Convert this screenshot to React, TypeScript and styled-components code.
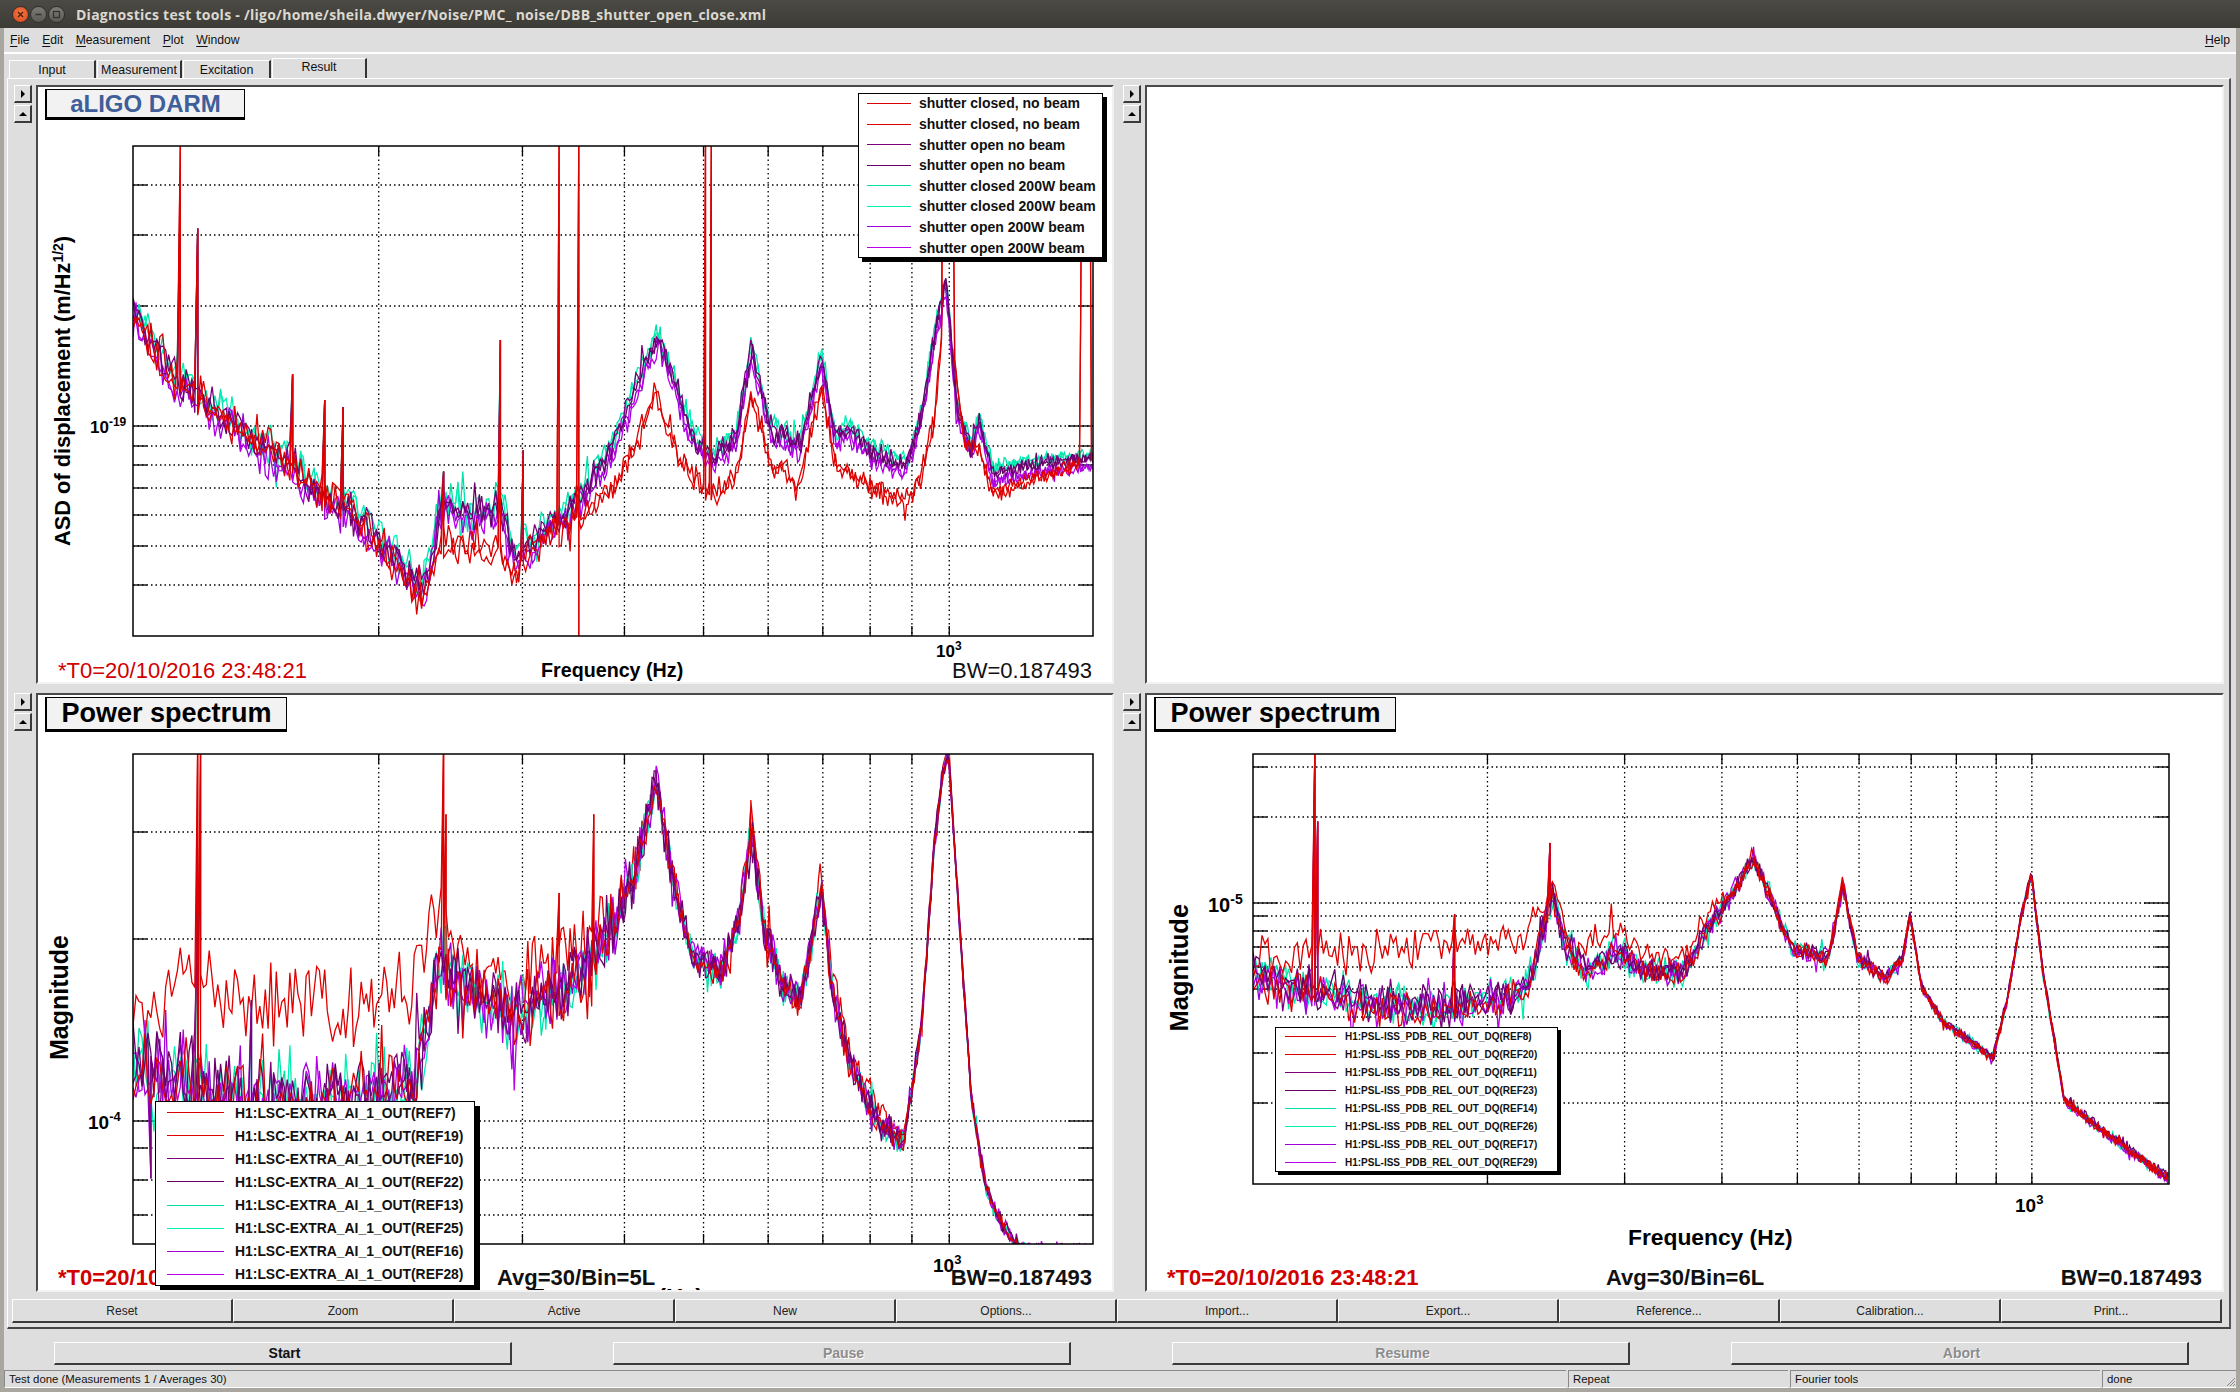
import React from "react"
import styled, { createGlobalStyle, css } from "styled-components"

const SCALE = 2240 / 1568

type Pt = [number, number]
type Spike = { x: number; top?: number; low?: number }
type Trace = { color: string; env: Pt[]; offset?: number; spikes?: Spike[] }
type Rect = { left: number; right: number; top: number; bottom: number }

const RED_A = "#d80000"
const RED_B = "#e00000"
const PURPLE_A = "#7c007c"
const PURPLE_B = "#680068"
const TEAL_A = "#00e0a8"
const TEAL_B = "#00f0b4"
const VIOLET_A = "#a000d8"
const VIOLET_B = "#b800e8"

const GlobalStyle = createGlobalStyle`
  html, body {
    margin: 0;
    padding: 0;
    background: #dedede;
  }
  * {
    box-sizing: border-box;
  }
`

const bevel = css`
  border-style: solid;
  border-width: 1px 2px 2px 1px;
  border-color: #fff #3a3a3a #3a3a3a #fff;
  background: #dedede;
`

const Window = styled.div`
  width: 2240px;
  height: 1392px;
  display: flex;
  flex-direction: column;
  overflow: hidden;
  background: #a9a59f;
  font-family: "Liberation Sans", Arial, sans-serif;
  color: #111;
`

const TitleBar = styled.header`
  height: 28px;
  flex: none;
  display: flex;
  align-items: center;
  padding-left: 12px;
  background: linear-gradient(#4b4a45, #3c3b37);
`

const WinButton = styled.span<{ $bg: string }>`
  width: 17px;
  height: 17px;
  margin-right: 1px;
  border-radius: 50%;
  background: ${(p) => p.$bg};
  border: 1px solid #2e2d2a;
  display: flex;
  align-items: center;
  justify-content: center;
`

const TitleText = styled.span`
  margin-left: 10px;
  font-family: "Open Sans", "Noto Sans", sans-serif;
  font-weight: 700;
  font-size: 14px;
  letter-spacing: 0.26px;
  color: #dcd8cf;
  white-space: nowrap;
`

const Body = styled.div`
  flex: 1;
  margin: 0 4px 4px;
  display: flex;
  flex-direction: column;
  background: #dedede;
`

const MenuBar = styled.nav`
  height: 26px;
  flex: none;
  display: flex;
  align-items: center;
  gap: 12.5px;
  padding: 0 6px 0 6px;
  border-bottom: 2px solid;
  border-image: linear-gradient(#8a8a8a 50%, #fff 50%) 1;
  font-size: 12.2px;

  u {
    text-decoration-thickness: 1px;
    text-underline-offset: 2px;
  }
`

const MenuSpacer = styled.span`
  flex: 1;
`

const TabRow = styled.div`
  height: 24px;
  flex: none;
  display: flex;
  align-items: flex-end;
  padding-left: 5px;
  gap: 1px;
`

const Tab = styled.div<{ $width: number; $active?: boolean }>`
  width: ${(p) => p.$width}px;
  height: ${(p) => (p.$active ? 20 : 18)}px;
  padding-bottom: ${(p) => (p.$active ? 3 : 0)}px;
  display: flex;
  align-items: center;
  justify-content: center;
  font-size: 12.4px;
  border-style: solid;
  border-width: 1px 2px 0 1px;
  border-color: #fff #333 #fff #fff;
  background: #dedede;
`

const TabFrame = styled.section`
  flex: none;
  margin: 0 5px 0 3px;
  padding: 6px 6px 4px 6px;
  border-style: solid;
  border-width: 1px 2px 2px 1px;
  border-color: #fff #555 #444 #fff;
`

const PaneGrid = styled.div`
  display: grid;
  grid-template-columns: 1100px 1101px;
  grid-template-rows: 599px 599px;
  gap: 9px;
`

const Pane = styled.div`
  display: flex;
  gap: 4px;
`

const PaneButtons = styled.div`
  width: 18px;
  flex: none;
  display: flex;
  flex-direction: column;
  gap: 2px;
`

const SmallButton = styled.button`
  ${bevel}
  width: 18px;
  height: 18px;
  padding: 0;
  display: flex;
  align-items: center;
  justify-content: center;
`

const ArrowRight = styled.span`
  width: 0;
  height: 0;
  border-left: 4px solid #000;
  border-top: 4px solid transparent;
  border-bottom: 4px solid transparent;
`

const ArrowUp = styled.span`
  width: 0;
  height: 0;
  border-bottom: 4px solid #000;
  border-left: 4px solid transparent;
  border-right: 4px solid transparent;
`

const Canvas = styled.div`
  position: relative;
  flex: 1;
  overflow: hidden;
  background: #fff;
  border-style: solid;
  border-width: 2px;
  border-color: #4a4a4a #f2f2f2 #f2f2f2 #4a4a4a;
`

const ChartSvg = styled.svg`
  display: block;
  position: absolute;
  left: 0;
  top: 0;
`

const ChartText = styled.text<{ $size: number }>`
  font-family: "Liberation Sans", Arial, sans-serif;
  font-weight: 700;
  font-size: ${(p) => p.$size}px;
  fill: #000;
`

const PlotTitle = styled.div<{ $width: number; $height: number; $size: number; $color?: string }>`
  position: absolute;
  left: 7px;
  top: 2px;
  width: ${(p) => p.$width}px;
  height: ${(p) => p.$height}px;
  display: flex;
  align-items: center;
  justify-content: center;
  background: #f2f2f2;
  border: 1px solid #000;
  border-left-width: 2px;
  border-bottom-width: 3px;
  font-weight: 700;
  font-size: ${(p) => p.$size}px;
  color: ${(p) => p.$color ?? "#000"};
  white-space: nowrap;
`

const Stats = styled.div<{ $bold?: boolean }>`
  position: absolute;
  left: 0;
  right: 0;
  bottom: ${(p) => (p.$bold ? 1 : 0)}px;
  height: 24px;
  padding: 0 20px;
  display: grid;
  grid-template-columns: 439px 1fr auto;
  align-items: center;
  font-size: 22px;
  font-weight: ${(p) => (p.$bold ? 700 : 400)};
  white-space: nowrap;
`

const StampText = styled.span`
  color: #d00000;
`

const Legend = styled.div<{ $x: number; $y: number; $w: number; $h: number; $shadow: number }>`
  position: absolute;
  left: ${(p) => p.$x}px;
  top: ${(p) => p.$y}px;
  width: ${(p) => p.$w}px;
  height: ${(p) => p.$h}px;
  background: #fff;
  border: 1px solid #000;
  box-shadow: ${(p) => p.$shadow}px ${(p) => p.$shadow}px 0 #000;
  display: flex;
  flex-direction: column;
  justify-content: center;
`

const LegendRow = styled.div<{ $h: number; $size: number; $pad: number; $gap: number }>`
  height: ${(p) => p.$h}px;
  flex: none;
  display: flex;
  align-items: center;
  gap: ${(p) => p.$gap}px;
  padding-left: ${(p) => p.$pad}px;
  font-size: ${(p) => p.$size}px;
  font-weight: 700;
  white-space: nowrap;
`

const Swatch = styled.span<{ $w: number; $color: string }>`
  width: ${(p) => p.$w}px;
  height: 1px;
  flex: none;
  background: ${(p) => p.$color};
`

const ToolRow = styled.div`
  margin: 7px 0 0 -2px;
  width: 2210px;
  height: 24px;
  display: grid;
  grid-template-columns: repeat(10, 1fr);
`

const ToolButton = styled.button`
  ${bevel}
  padding: 0;
  font: 400 12px "Liberation Sans", Arial, sans-serif;
  color: #222;
`

const ActionRow = styled.div`
  flex: none;
  margin-top: 13px;
  padding-left: 50px;
  display: flex;
  gap: 101px;
`

const ActionButton = styled.button<{ $off?: boolean }>`
  ${bevel}
  width: 458px;
  height: 23px;
  padding: 0 0 0 4px;
  font: 700 14px "Liberation Sans", Arial, sans-serif;
  color: ${(p) => (p.$off ? "#8c8c8c" : "#111")};
  text-shadow: ${(p) => (p.$off ? "1px 1px 0 #fff" : "none")};
`

const StatusBar = styled.footer`
  flex: none;
  margin-top: 5px;
  height: 18px;
  display: grid;
  grid-template-columns: 1562px 220px 310px 1fr;
  gap: 2px;
  font-size: 11.4px;
`

const StatusCell = styled.div`
  position: relative;
  display: flex;
  align-items: center;
  padding-left: 4px;
  border-style: solid;
  border-width: 1px 0 1px 1px;
  border-color: #8a8a8a #fff #fff #8a8a8a;
`

const Grip = styled.svg`
  position: absolute;
  right: 0;
  bottom: 0;
`

function mulberry(seed: number) {
  let a = seed
  return () => {
    a = (a + 0x6d2b79f5) | 0
    let t = Math.imul(a ^ (a >>> 15), 1 | a)
    t = (t + Math.imul(t ^ (t >>> 7), 61 | t)) ^ t
    return ((t ^ (t >>> 14)) >>> 0) / 4294967296
  }
}

function lerp(pts: Pt[], x: number) {
  if (x <= pts[0][0]) return pts[0][1]
  for (let i = 1; i < pts.length; i++) {
    if (x <= pts[i][0]) {
      const [x0, y0] = pts[i - 1]
      const [x1, y1] = pts[i]
      return y0 + ((y1 - y0) * (x - x0)) / (x1 - x0)
    }
  }
  return pts[pts.length - 1][1]
}

// env, amp and spikes are written in the units of the 1568 wide overview
function buildTrace(t: Trace, amp: Pt[], rect: Rect, seed: number) {
  const rnd = mulberry(seed)
  const out: string[] = []
  const spikes = [...(t.spikes ?? [])].sort((a, b) => a.x - b.x)
  let next = 0
  const from = rect.left / SCALE
  const to = rect.right / SCALE
  let d = from
  while (d <= to) {
    let n = (rnd() + rnd() - 1) * lerp(amp, d)
    if (rnd() < 0.06) n *= 1.8
    const y = lerp(t.env, d) + (t.offset ?? 0) + n
    while (next < spikes.length && spikes[next].x <= d) {
      const s = spikes[next]
      const px = (d * SCALE).toFixed(1)
      if (s.top !== undefined) out.push(`${px},${(s.top * SCALE).toFixed(1)}`)
      if (s.low !== undefined) out.push(`${px},${(s.low * SCALE).toFixed(1)}`)
      next++
    }
    out.push(`${(d * SCALE).toFixed(1)},${(y * SCALE).toFixed(1)}`)
    // points lie wider apart at the low end of the log axis
    d += (3 - (1.8 * (d - from)) / (to - from)) / SCALE
  }
  return out.join(" ")
}

const DARM_ENV: Pt[] = [
  [93, 215], [110, 245], [125, 265], [150, 285], [180, 310], [200, 320], [225, 345], [250, 360], [270, 380],
  [295, 412], [300, 395], [310, 350], [330, 365], [350, 350], [360, 390], [375, 375], [395, 360], [415, 335],
  [430, 310], [445, 270], [460, 235], [472, 265], [485, 305], [500, 320], [515, 305], [526, 245], [540, 300],
  [560, 310], [575, 250], [585, 305], [595, 300], [610, 315], [635, 325], [645, 290], [655, 230], [662, 195],
  [670, 285], [680, 315], [685, 292], [695, 330], [720, 325], [765, 320],
]
const DARM_RED: Pt[] = [
  [93, 215], [110, 245], [125, 265], [150, 285], [180, 310], [200, 320], [225, 345], [250, 360], [270, 385],
  [295, 422], [300, 405], [310, 380], [330, 385], [350, 385], [360, 400], [375, 380], [395, 370], [415, 352],
  [430, 340], [445, 310], [458, 275], [472, 310], [485, 335], [500, 345], [515, 335], [526, 275], [540, 325],
  [560, 335], [575, 270], [585, 325], [610, 340], [635, 350], [645, 330], [655, 285], [659, 240], [660, 90],
  [667, 90], [668, 250], [675, 310], [685, 312], [695, 345], [720, 335], [756, 324], [757, 90], [763, 90],
  [764, 320], [765, 320],
]
const DARM_AMP: Pt[] = [[93, 17], [300, 17], [450, 11], [660, 9], [700, 6], [765, 5]]
const DARM_LINES: Spike[] = [
  { x: 125, top: 130 }, { x: 138, top: 160 }, { x: 203, top: 262 }, { x: 226, top: 280 }, { x: 240, top: 285 },
  { x: 310, top: 330 }, { x: 350, top: 238 }, { x: 365, top: 315 },
]
const DARM_RED_LINES: Spike[] = [
  { x: 125, top: 102 }, { x: 138, top: 160 }, { x: 203, top: 262 }, { x: 226, top: 280 }, { x: 240, top: 285 },
  { x: 310, top: 330 }, { x: 350, top: 238 }, { x: 365, top: 315 }, { x: 391, top: 100 }, { x: 404, top: 100, low: 450 },
  { x: 493, top: 100 }, { x: 497, top: 100, low: 350 },
]

const LSC_ENV: Pt[] = [
  [93, 745], [130, 755], [170, 772], [200, 772], [250, 768], [290, 758], [298, 720], [308, 670], [320, 690],
  [340, 700], [360, 715], [380, 695], [400, 690], [415, 670], [430, 645], [445, 610], [459, 545], [470, 610],
  [485, 670], [505, 680], [518, 640], [526, 580], [535, 650], [548, 690], [560, 700], [568, 660], [575, 620],
  [582, 690], [595, 745], [615, 785], [632, 800], [645, 720], [654, 590], [660, 540], [664, 528], [670, 620],
  [680, 770], [690, 830], [700, 855], [715, 875],
]
const LSC_HIGH: Pt[] = [
  [93, 700], [130, 690], [180, 700], [220, 700], [260, 700], [285, 690], [298, 670], [308, 630], [320, 670],
  [340, 680], [360, 695], [380, 670], [400, 672], [415, 650], [430, 640], [445, 608], [459, 545], [470, 610],
  [485, 670], [505, 680], [518, 640], [526, 570], [535, 650], [548, 690], [560, 700], [568, 660], [575, 610],
  [582, 680], [595, 735], [615, 775], [632, 795], [645, 720], [654, 590], [660, 540], [664, 520], [670, 620],
  [680, 770], [690, 830], [700, 855], [715, 875],
]
const LSC_AMP: Pt[] = [[93, 36], [300, 34], [440, 26], [460, 14], [530, 16], [600, 13], [665, 6], [765, 4]]
const LSC_LINES: Spike[] = [
  { x: 105, low: 825 }, { x: 138, top: 640 }, { x: 175, top: 700 },
]
const LSC_RED_LINES: Spike[] = [
  { x: 137, top: 520 }, { x: 138.5, top: 520 }, { x: 140, top: 600 }, { x: 310, top: 520 }, { x: 311.5, top: 570 },
  { x: 390, top: 625 }, { x: 415, top: 570 }, { x: 525, top: 565 },
]

const PSL_ENV: Pt[] = [
  [878, 682], [900, 690], [950, 700], [1000, 705], [1050, 700], [1070, 690], [1080, 650], [1087, 625], [1095, 660],
  [1110, 680], [1130, 665], [1150, 680], [1180, 680], [1195, 650], [1210, 630], [1227, 600], [1240, 630], [1255, 665],
  [1280, 670], [1290, 620], [1300, 670], [1320, 685], [1332, 670], [1337, 640], [1345, 690], [1360, 715], [1395, 740],
  [1405, 700], [1415, 640], [1422, 612], [1430, 680], [1445, 770], [1470, 790], [1518, 825],
]
const PSL_HIGH: Pt[] = [
  [878, 672], [920, 668], [1000, 662], [1060, 660], [1075, 640], [1087, 615], [1100, 670], [1130, 650], [1150, 665],
  [1180, 668], [1195, 640], [1210, 628], [1227, 600], [1240, 630], [1255, 665], [1280, 670], [1290, 618], [1300, 670],
  [1320, 685], [1332, 670], [1337, 640], [1345, 690], [1360, 715], [1395, 740], [1405, 700], [1415, 640], [1422, 612],
  [1430, 680], [1445, 770], [1470, 790], [1518, 825],
]
const PSL_AMP: Pt[] = [[878, 20], [1070, 16], [1210, 9], [1290, 7], [1350, 4], [1518, 4]]
const PSL_LINES: Spike[] = [
  { x: 920, top: 527 }, { x: 921, top: 575 }, { x: 1017, top: 640 }, { x: 1085, top: 590 },
]

const darmTraces: Trace[] = [
  { color: TEAL_A, env: DARM_ENV, offset: -3, spikes: DARM_LINES },
  { color: TEAL_B, env: DARM_ENV, offset: -2, spikes: DARM_LINES },
  { color: VIOLET_A, env: DARM_ENV, offset: 6, spikes: DARM_LINES },
  { color: VIOLET_B, env: DARM_ENV, offset: 7 },
  { color: PURPLE_A, env: DARM_ENV, spikes: DARM_LINES },
  { color: PURPLE_B, env: DARM_ENV, offset: 1 },
  { color: RED_A, env: DARM_RED, spikes: DARM_RED_LINES },
  { color: RED_B, env: DARM_RED, offset: 2, spikes: DARM_RED_LINES },
]

const lscTraces: Trace[] = [
  { color: RED_B, env: LSC_HIGH, spikes: LSC_RED_LINES },
  { color: TEAL_A, env: LSC_ENV, spikes: LSC_LINES },
  { color: TEAL_B, env: LSC_ENV, offset: 2 },
  { color: VIOLET_A, env: LSC_ENV, offset: 2, spikes: LSC_LINES },
  { color: VIOLET_B, env: LSC_ENV, offset: -2 },
  { color: PURPLE_A, env: LSC_ENV, offset: 1, spikes: LSC_LINES },
  { color: PURPLE_B, env: LSC_ENV, offset: -1 },
  { color: RED_A, env: LSC_ENV, offset: 1, spikes: LSC_RED_LINES },
]

const pslTraces: Trace[] = [
  { color: TEAL_A, env: PSL_ENV, spikes: PSL_LINES },
  { color: TEAL_B, env: PSL_ENV, offset: 1 },
  { color: VIOLET_A, env: PSL_ENV, spikes: PSL_LINES },
  { color: VIOLET_B, env: PSL_ENV, offset: 1, spikes: PSL_LINES },
  { color: PURPLE_A, env: PSL_ENV },
  { color: PURPLE_B, env: PSL_ENV, offset: -1 },
  { color: RED_A, env: PSL_ENV, offset: 1, spikes: PSL_LINES },
  { color: RED_B, env: PSL_HIGH, spikes: PSL_LINES },
]

const GRID_FREQS = [200, 300, 400, 500, 600, 700, 800, 900, 1000]

type PlotProps = {
  id: string
  origin: Pt
  size: Pt
  rect: Rect
  yTicks: { y: number; major?: boolean }[]
  traces: Trace[]
  amp: Pt[]
  seed: number
  children?: React.ReactNode
}

function Plot({ id, origin, size, rect, yTicks, traces, amp, seed, children }: PlotProps) {
  const w = rect.right - rect.left
  const xOf = (f: number) => rect.left + (w * Math.log10(f / 100)) / Math.log10(15)
  return (
    <ChartSvg width={size[0]} height={size[1]} viewBox={`${origin[0]} ${origin[1]} ${size[0]} ${size[1]}`}>
      <defs>
        <clipPath id={id}>
          <rect x={rect.left} y={rect.top} width={w} height={rect.bottom - rect.top} />
        </clipPath>
      </defs>
      {GRID_FREQS.map((f) => (
        <g key={f} stroke="#000" strokeWidth={1.3}>
          <line x1={xOf(f)} x2={xOf(f)} y1={rect.top} y2={rect.bottom} strokeDasharray="1.5 3" />
          <line x1={xOf(f)} x2={xOf(f)} y1={rect.top} y2={rect.top + 10} />
          <line x1={xOf(f)} x2={xOf(f)} y1={rect.bottom - 10} y2={rect.bottom} />
        </g>
      ))}
      {yTicks.map((t) => (
        <g key={t.y} stroke="#000" strokeWidth={1.3}>
          <line x1={rect.left} x2={rect.right} y1={t.y} y2={t.y} strokeDasharray="1.5 3" />
          <line x1={rect.left} x2={rect.left + (t.major ? 25 : 14)} y1={t.y} y2={t.y} />
          <line x1={rect.right - (t.major ? 25 : 14)} x2={rect.right} y1={t.y} y2={t.y} />
        </g>
      ))}
      <g clipPath={`url(#${id})`} fill="none" strokeWidth={1.3} strokeLinejoin="miter">
        {traces.map((t, i) => (
          <polyline key={i} points={buildTrace(t, amp, rect, seed + i * 97)} stroke={t.color} />
        ))}
      </g>
      <rect x={rect.left} y={rect.top} width={w} height={rect.bottom - rect.top} fill="none" stroke="#000" strokeWidth={1.5} />
      {children}
    </ChartSvg>
  )
}

const PaneArrows = () => (
  <PaneButtons>
    <SmallButton>
      <ArrowRight />
    </SmallButton>
    <SmallButton>
      <ArrowUp />
    </SmallButton>
  </PaneButtons>
)

type LegendEntry = { name: string; color: string }
const legendColors = [RED_A, RED_B, PURPLE_A, PURPLE_B, TEAL_A, TEAL_B, VIOLET_A, VIOLET_B]
const darmLegend: LegendEntry[] = [
  "shutter closed, no beam",
  "shutter closed, no beam",
  "shutter open no beam",
  "shutter open no beam",
  "shutter closed 200W beam",
  "shutter closed 200W beam",
  "shutter open 200W beam",
  "shutter open 200W beam",
].map((name, i) => ({ name, color: legendColors[i] }))
const lscLegend: LegendEntry[] = [7, 19, 10, 22, 13, 25, 16, 28].map((n, i) => ({
  name: `H1:LSC-EXTRA_AI_1_OUT(REF${n})`,
  color: legendColors[i],
}))
const pslLegend: LegendEntry[] = [8, 20, 11, 23, 14, 26, 17, 29].map((n, i) => ({
  name: `H1:PSL-ISS_PDB_REL_OUT_DQ(REF${n})`,
  color: legendColors[i],
}))

const TOOL_LABELS = ["Reset", "Zoom", "Active", "New", "Options...", "Import...", "Export...", "Reference...", "Calibration...", "Print..."]

export default function App() {
  const s = SCALE
  return (
    <>
      <GlobalStyle />
      <Window>
        <TitleBar>
          <WinButton $bg="radial-gradient(circle at 50% 40%, #f47b45, #d8431a)">
            <svg width="9" height="9" viewBox="0 0 9 9">
              <path d="M2 2l5 5M7 2l-5 5" stroke="#4a1a08" strokeWidth="1.3" />
            </svg>
          </WinButton>
          <WinButton $bg="linear-gradient(#7d7b74, #5c5a54)">
            <svg width="9" height="9" viewBox="0 0 9 9">
              <path d="M1.5 4.5h6" stroke="#33322e" strokeWidth="1.5" />
            </svg>
          </WinButton>
          <WinButton $bg="linear-gradient(#7d7b74, #5c5a54)">
            <svg width="9" height="9" viewBox="0 0 9 9">
              <rect x="1.5" y="1.5" width="6" height="6" fill="none" stroke="#33322e" strokeWidth="1.2" />
            </svg>
          </WinButton>
          <TitleText>Diagnostics test tools - /ligo/home/sheila.dwyer/Noise/PMC_ noise/DBB_shutter_open_close.xml</TitleText>
        </TitleBar>
        <Body>
          <MenuBar>
            <span><u>F</u>ile</span>
            <span><u>E</u>dit</span>
            <span><u>M</u>easurement</span>
            <span><u>P</u>lot</span>
            <span><u>W</u>indow</span>
            <MenuSpacer />
            <span><u>H</u>elp</span>
          </MenuBar>
          <TabRow>
            <Tab $width={87}>Input</Tab>
            <Tab $width={85}>Measurement</Tab>
            <Tab $width={88}>Excitation</Tab>
            <Tab $width={95} $active>Result</Tab>
          </TabRow>
          <TabFrame>
            <PaneGrid>
              <Pane>
                <PaneArrows />
                <Canvas>
                  <Plot
                    id="darm"
                    origin={[38, 87]}
                    size={[1074, 595]}
                    rect={{ left: 133, right: 1093, top: 146, bottom: 636 }}
                    yTicks={[{ y: 185 }, { y: 235 }, { y: 306 }, { y: 426, major: true }, { y: 446 }, { y: 465 }, { y: 488 }, { y: 515 }, { y: 546 }, { y: 585 }]}
                    traces={darmTraces}
                    amp={DARM_AMP}
                    seed={11}
                  >
                    <ChartText $size={21.8} transform="translate(70 546) rotate(-90)">
                      ASD of displacement (m/Hz
                      <tspan dy={-7} fontSize={14}>1/2</tspan>
                      <tspan dy={7}>)</tspan>
                    </ChartText>
                    <ChartText $size={17} x={90} y={433}>
                      10<tspan dy={-7} fontSize={12}>-19</tspan>
                    </ChartText>
                    <ChartText $size={17} x={936} y={657}>
                      10<tspan dy={-7} fontSize={12}>3</tspan>
                    </ChartText>
                    <ChartText $size={19.7} x={541} y={677}>Frequency (Hz)</ChartText>
                  </Plot>
                  <PlotTitle $width={200} $height={31} $size={24} $color="#3f5f9a">aLIGO DARM</PlotTitle>
                  <Stats>
                    <StampText>*T0=20/10/2016 23:48:21</StampText>
                    <span />
                    <span>BW=0.187493</span>
                  </Stats>
                  <Legend $x={820} $y={6} $w={245} $h={165} $shadow={4}>
                    {darmLegend.map((e, i) => (
                      <LegendRow key={i} $h={20.6} $size={14} $pad={8} $gap={8}>
                        <Swatch $w={44} $color={e.color} />
                        {e.name}
                      </LegendRow>
                    ))}
                  </Legend>
                </Canvas>
              </Pane>
              <Pane>
                <PaneArrows />
                <Canvas />
              </Pane>
              <Pane>
                <PaneArrows />
                <Canvas>
                  <Plot
                    id="lsc"
                    origin={[38, 695]}
                    size={[1074, 595]}
                    rect={{ left: 133, right: 1093, top: 754, bottom: 1244 }}
                    yTicks={[{ y: 832 }, { y: 939 }, { y: 1121, major: true }, { y: 1148 }, { y: 1180 }, { y: 1215 }]}
                    traces={lscTraces}
                    amp={LSC_AMP}
                    seed={431}
                  >
                    <ChartText $size={25} transform={`translate(${41 * s + 9} ${742 * s}) rotate(-90)`}>Magnitude</ChartText>
                    <ChartText $size={19} x={88} y={1129}>
                      10<tspan dy={-8} fontSize={13}>-4</tspan>
                    </ChartText>
                    <ChartText $size={19} x={933} y={1272}>
                      10<tspan dy={-8} fontSize={13}>3</tspan>
                    </ChartText>
                    <ChartText $size={24} x={530} y={1306}>Frequency (Hz)</ChartText>
                  </Plot>
                  <PlotTitle $width={242} $height={35} $size={27}>Power spectrum</PlotTitle>
                  <Stats $bold>
                    <StampText>*T0=20/10/2016 23:48:21</StampText>
                    <span>Avg=30/Bin=5L</span>
                    <span>BW=0.187493</span>
                  </Stats>
                  <Legend $x={117} $y={406} $w={320} $h={185} $shadow={5}>
                    {lscLegend.map((e, i) => (
                      <LegendRow key={i} $h={23.1} $size={13.9} $pad={11} $gap={11}>
                        <Swatch $w={57} $color={e.color} />
                        {e.name}
                      </LegendRow>
                    ))}
                  </Legend>
                </Canvas>
              </Pane>
              <Pane>
                <PaneArrows />
                <Canvas>
                  <Plot
                    id="psl"
                    origin={[1147, 695]}
                    size={[1075, 595]}
                    rect={{ left: 1253, right: 2169, top: 754, bottom: 1184 }}
                    yTicks={[{ y: 767 }, { y: 817 }, { y: 903, major: true }, { y: 916 }, { y: 931 }, { y: 947 }, { y: 967 }, { y: 989 }, { y: 1017 }, { y: 1053 }, { y: 1103 }]}
                    traces={pslTraces}
                    amp={PSL_AMP}
                    seed={977}
                  >
                    <ChartText $size={25.5} transform={`translate(${825 * s + 9} ${722 * s}) rotate(-90)`}>Magnitude</ChartText>
                    <ChartText $size={20} x={1208} y={912}>
                      10<tspan dy={-8} fontSize={14}>-5</tspan>
                    </ChartText>
                    <ChartText $size={19} x={2015} y={1212}>
                      10<tspan dy={-8} fontSize={13}>3</tspan>
                    </ChartText>
                    <ChartText $size={22.8} x={1628} y={1245}>Frequency (Hz)</ChartText>
                  </Plot>
                  <PlotTitle $width={242} $height={35} $size={27}>Power spectrum</PlotTitle>
                  <Stats $bold>
                    <StampText>*T0=20/10/2016 23:48:21</StampText>
                    <span>Avg=30/Bin=6L</span>
                    <span>BW=0.187493</span>
                  </Stats>
                  <Legend $x={128} $y={332} $w={283} $h={145} $shadow={3}>
                    {pslLegend.map((e, i) => (
                      <LegendRow key={i} $h={18} $size={10} $pad={9} $gap={9}>
                        <Swatch $w={51} $color={e.color} />
                        {e.name}
                      </LegendRow>
                    ))}
                  </Legend>
                </Canvas>
              </Pane>
            </PaneGrid>
            <ToolRow>
              {TOOL_LABELS.map((label) => (
                <ToolButton key={label}>{label}</ToolButton>
              ))}
            </ToolRow>
          </TabFrame>
          <ActionRow>
            <ActionButton>Start</ActionButton>
            <ActionButton $off>Pause</ActionButton>
            <ActionButton $off>Resume</ActionButton>
            <ActionButton $off>Abort</ActionButton>
          </ActionRow>
          <StatusBar>
            <StatusCell>Test done (Measurements 1 / Averages 30)</StatusCell>
            <StatusCell>Repeat</StatusCell>
            <StatusCell>Fourier tools</StatusCell>
            <StatusCell>
              done
              <Grip width="12" height="12" viewBox="0 0 12 12">
                <path d="M11 3l-8 8M11 6l-5 5M11 9l-2 2" stroke="#888" strokeWidth="1" />
              </Grip>
            </StatusCell>
          </StatusBar>
        </Body>
      </Window>
    </>
  )
}
